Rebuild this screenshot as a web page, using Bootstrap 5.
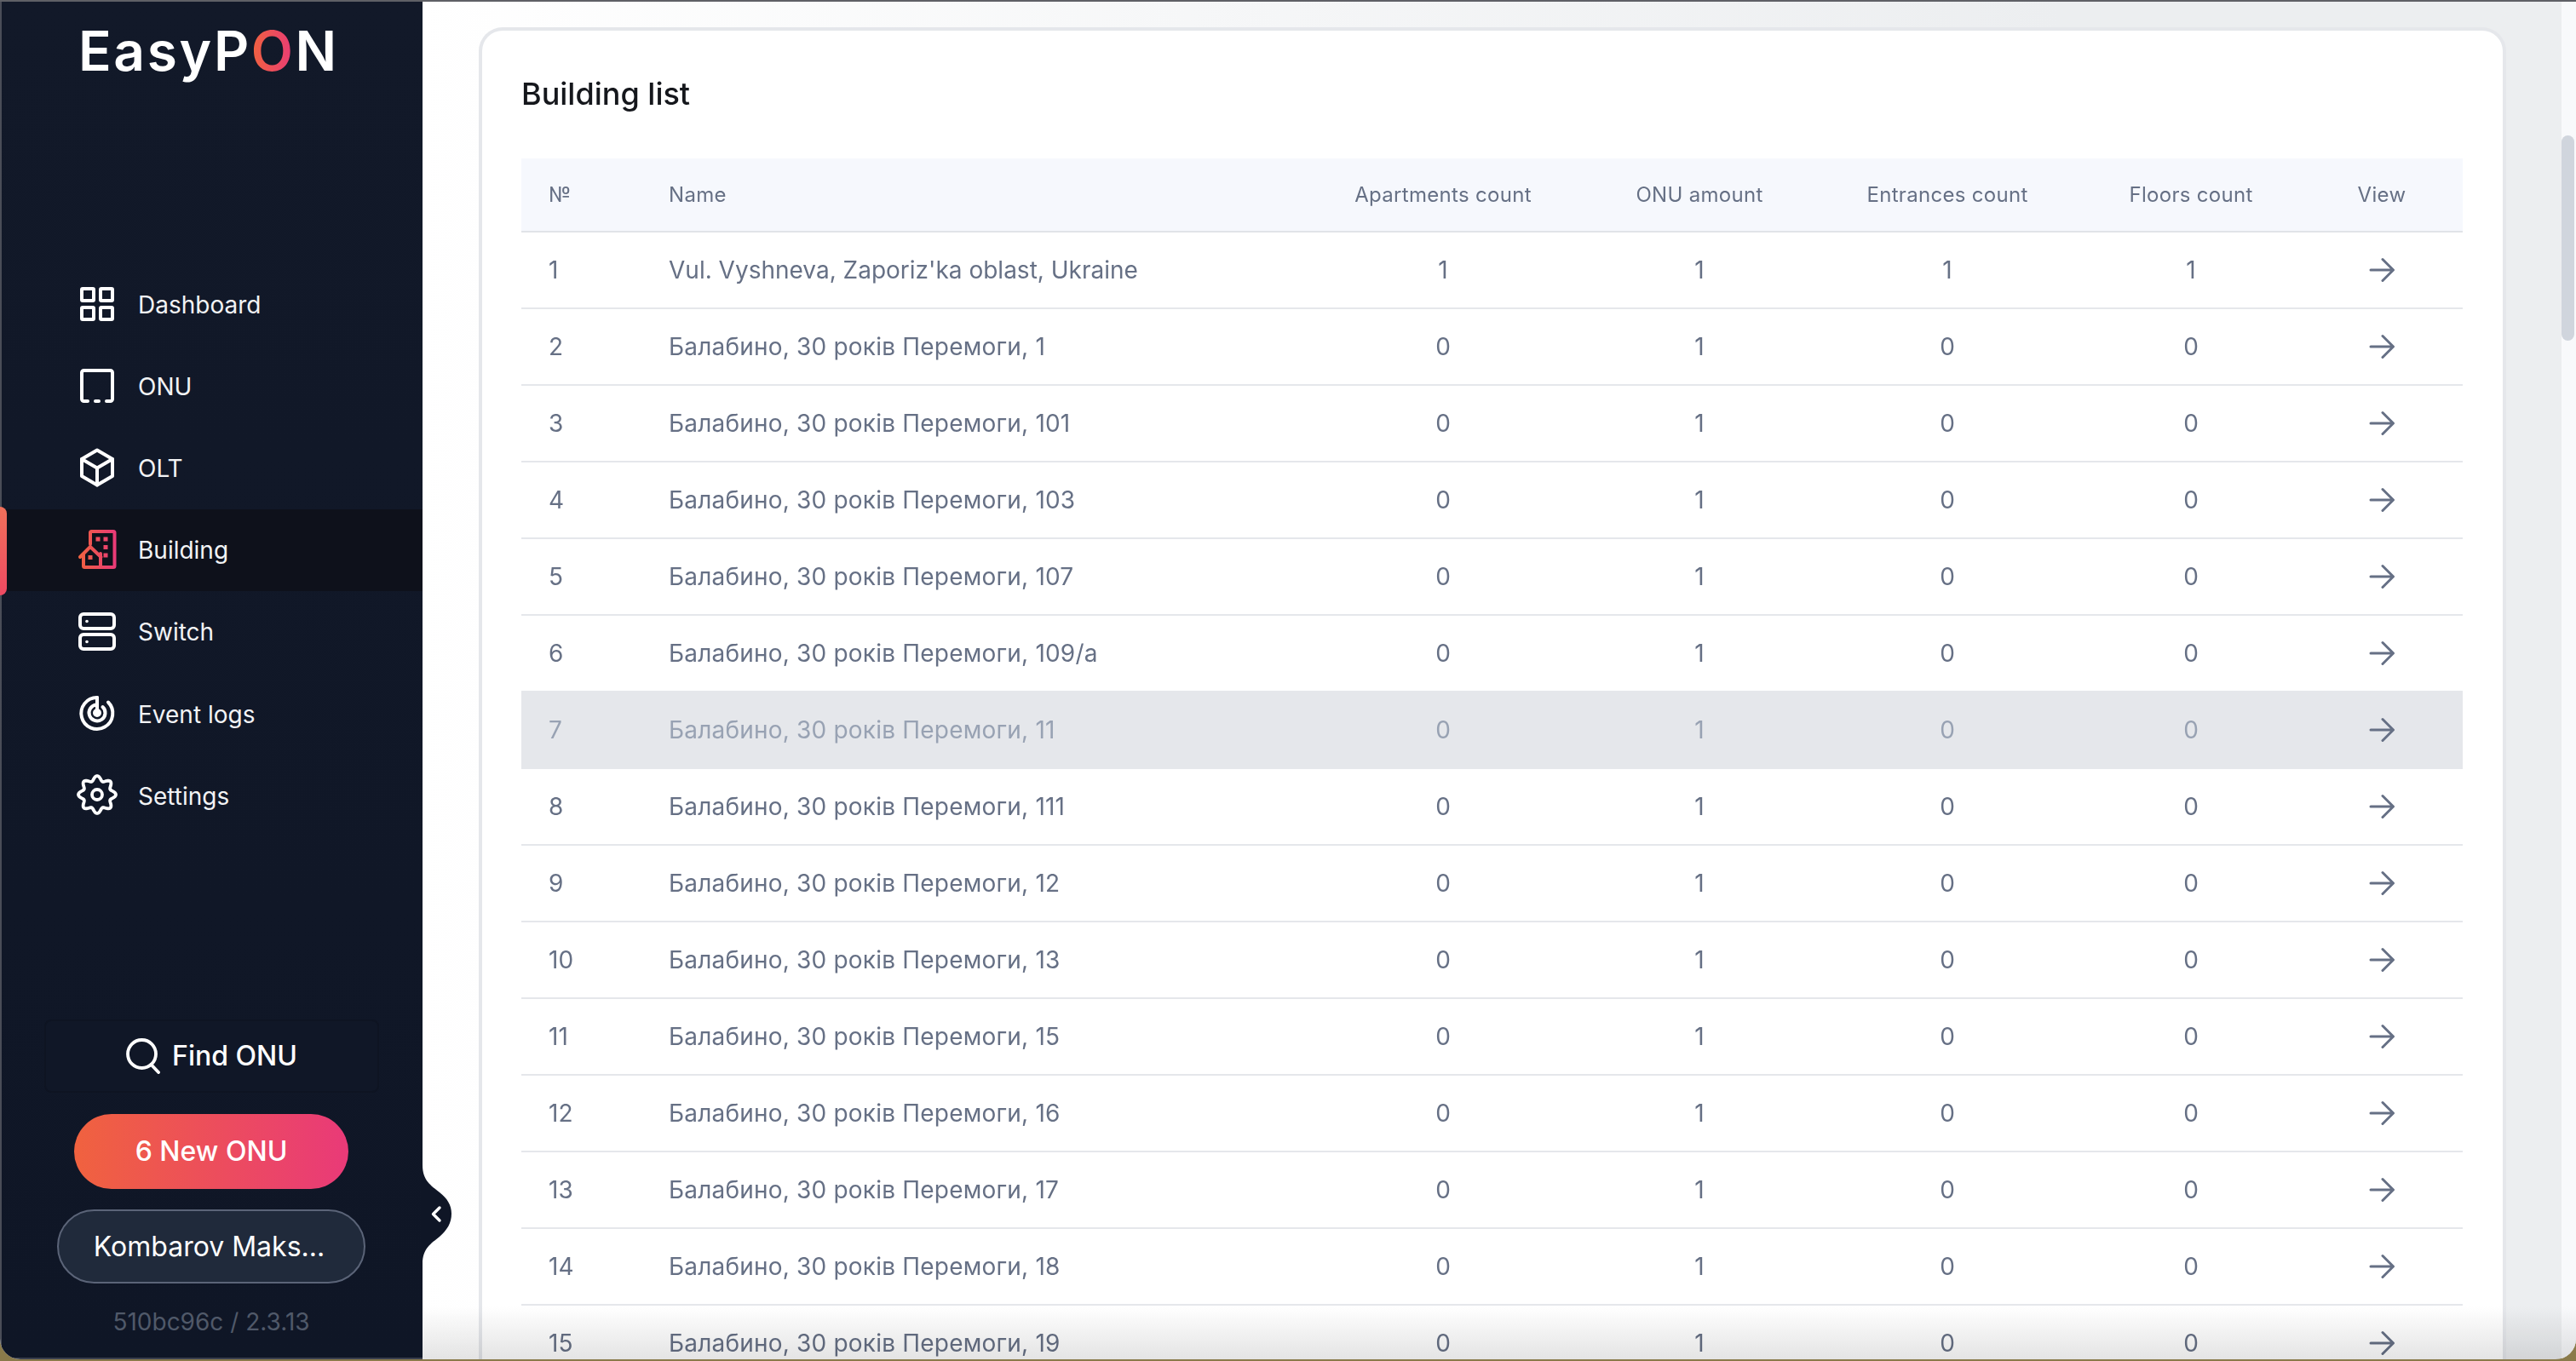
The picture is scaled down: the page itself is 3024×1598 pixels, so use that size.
<!DOCTYPE html>
<html lang="en">
<head>
<meta charset="UTF-8" />
<title>EasyPON</title>
<link href="https://cdn.jsdelivr.net/npm/bootstrap@5.3.3/dist/css/bootstrap.min.css" rel="stylesheet">
<script src="https://cdn.jsdelivr.net/npm/bootstrap@5.3.3/dist/js/bootstrap.bundle.min.js"></script>
<style>
html, body { height: 100%; }
body { background: #8a7a4a; overflow: hidden; font-family: Inter, "Liberation Sans", sans-serif; }
.app-window { height: 1596px; border-top: 2px solid #5f6066; border-radius: 0 0 24px 24px; overflow: hidden; position: relative; background: linear-gradient(90deg, #fff 16%, #eceef0 80%); }
.side-bar { width: 496px; flex: none; background: linear-gradient(180deg, #121929, #0f1626); border-left: 2px solid #4a4d57; border-bottom: 2px solid #3a3f4d; color: #fff; position: relative; z-index: 2; }
.brand { font-size: 64px; font-weight: 600; line-height: 1; letter-spacing: 2.6px; padding: 26px 0 0 90px; height: 300px; }
.brand-o { background: linear-gradient(90deg, #f0623f, #e93a78); -webkit-background-clip: text; background-clip: text; color: transparent; }
.side-nav { margin-top: 8px; }
.side-link { height: 96.1px; padding-left: 89px; gap: 25px; font-size: 28px; font-weight: 400; color: #f2f3f5; position: relative; text-decoration: none; }
.side-link svg { width: 46px; height: 46px; flex: none; margin-bottom: 3px; overflow: visible; }
.side-link.is-active { background: #0e111b; }
.side-link.is-active::before { content: ""; position: absolute; left: -2px; top: -3px; bottom: -5px; width: 8px; background: linear-gradient(180deg, #f0705a, #ee4a62); border-radius: 0 8px 8px 0; }
.find-box { height: 86px; margin: 0 51px 25px 50px; gap: 14px; border: 2px solid #0e1422; border-radius: 8px; background: #101727; font-size: 32px; font-weight: 500; }
.new-onu { height: 88px; margin: 0 87px 24px 85px; border-radius: 44px; background: linear-gradient(90deg, #f0623f, #e93a78); font-size: 32px; font-weight: 500; }
.user-pill { height: 87px; margin: 0 67px 25px 65px; padding-right: 5px; border: 2px solid #5b6478; border-radius: 44px; background: #202a3b; font-size: 32px; font-weight: 400; }
.build-ver { font-size: 28px; color: #505969; line-height: 40px; padding-bottom: 22px; padding-right: 2px; }
.collapse-handle { position: absolute; left: 494px; top: 1366px; width: 40px; height: 116px; z-index: 3; }
.main-area { padding: 30px 82px 0 66px; position: relative; min-width: 0; }
.list-card { border: 4px solid #e5e7eb; border-bottom: 0; border-radius: 28px 28px 0 0; background: #fff; padding: 0 48px 0 46px; height: 1800px; }
.list-title { font-size: 36px; font-weight: 500; color: #15171c; line-height: 44px; margin: 0; padding: 52px 0 54px; }
.bld-table { width: 2279px; table-layout: fixed; border-collapse: collapse; color: #667085; font-size: 28px; }
.bld-table th { height: 86px; background: #f6f8fd; border-bottom: 2px solid #e1e3e8; font-size: 24px; font-weight: 400; letter-spacing: .3px; color: #667085; }
.bld-table td { height: 90px; border-bottom: 2px solid #e5e7eb; }
.bld-table th, .bld-table td { text-align: center; padding: 0; }
.bld-table th:first-child, .bld-table td:first-child { padding-left: 32px; text-align: left; }
.bld-table th:nth-child(2), .bld-table td:nth-child(2) { padding-left: 33px; text-align: left; }
.bld-table td.addr-uk { letter-spacing: .2px; }
.bld-table tr.is-muted td { background: #e5e7eb; color: #98a2b3; border-bottom-color: #e5e7eb; }
.row-arrow { width: 32px; height: 32px; display: block; margin: 0 auto; }
.scroll-track { position: absolute; right: 0; top: 0; bottom: 0; width: 17px; background: #f8f9fb; z-index: 1; }
.scroll-thumb { position: absolute; left: 0; right: 2px; top: 157px; height: 241px; border-radius: 8px; background: #d0d5dd; }
.bottom-fade { position: absolute; left: 496px; right: 0; bottom: 0; height: 62px; background: linear-gradient(180deg, #fff, #e4e4e4); mix-blend-mode: multiply; z-index: 1; pointer-events: none; }
</style>
</head>
<body>
<div class="app-window d-flex">
  <aside class="side-bar d-flex flex-column">
    <div class="brand">EasyP<span class="brand-o">O</span>N</div>
    <nav class="side-nav d-flex flex-column">
      <a class="side-link d-flex align-items-center" href="#">
        <svg viewBox="0 0 46 46" fill="none" stroke="#fff" stroke-width="4" stroke-linejoin="round"><rect x="5" y="5" width="14" height="14" rx="1"/><rect x="27" y="5" width="14" height="14" rx="1"/><rect x="5" y="27" width="14" height="14" rx="1"/><rect x="27" y="27" width="14" height="14" rx="1"/></svg>Dashboard</a>
      <a class="side-link d-flex align-items-center" href="#">
        <svg viewBox="0 0 46 46" fill="none" stroke="#fff" stroke-width="4" stroke-linecap="round" stroke-linejoin="round"><path d="M12 41H7.500a2.500 2.500 0 0 1-2.500-2.500V7.500A2.500 2.500 0 0 1 7.500 5h31A2.500 2.500 0 0 1 41 7.500v31a2.500 2.500 0 0 1-2.500 2.500H34"/><path d="M21 41h4"/></svg>ONU</a>
      <a class="side-link d-flex align-items-center" href="#">
        <svg viewBox="0 0 46 46" fill="none" stroke="#fff" stroke-width="4" stroke-linecap="round" stroke-linejoin="round"><path d="M23 2.500 41 13v20L23 43.500 5 33V13Z"/><path d="M5 13 23 23.500 41 13M23 23.500v20"/></svg>OLT</a>
      <a class="side-link is-active d-flex align-items-center" href="#">
        <svg viewBox="0 0 46 46" fill="none"><defs><linearGradient id="bldg" gradientUnits="userSpaceOnUse" x1="1" x2="45" y1="0" y2="0"><stop offset="0" stop-color="#f0623f"/><stop offset="1" stop-color="#e93a78"/></linearGradient></defs><path d="M15 17V3.500A1.500 1.500 0 0 1 16.500 2H42a1.500 1.500 0 0 1 1.500 1.500V42.500A1.500 1.500 0 0 1 42 44H8.500A1.500 1.500 0 0 1 7 42.500V28M3 32 15 20 27.500 32M27 28V44" stroke="url(#bldg)" stroke-width="4" stroke-linejoin="round" stroke-linecap="round"/><rect x="21.500" y="8.500" width="5" height="5" fill="url(#bldg)"/><rect x="30.500" y="8.500" width="5" height="5" fill="url(#bldg)"/><rect x="30.500" y="18" width="5" height="5" fill="url(#bldg)"/><rect x="30.500" y="27.500" width="5" height="5" fill="url(#bldg)"/><rect x="12.500" y="30" width="5" height="5" fill="url(#bldg)"/></svg>Building</a>
      <a class="side-link d-flex align-items-center" href="#">
        <svg viewBox="0 0 46 46" fill="none" stroke="#fff" stroke-width="4"><rect x="3" y="3" width="40" height="17" rx="4"/><rect x="3" y="27" width="40" height="17" rx="4"/><circle cx="11" cy="11.500" r="1.800" fill="#fff" stroke="none"/><circle cx="11" cy="35.500" r="1.800" fill="#fff" stroke="none"/></svg>Switch</a>
      <a class="side-link d-flex align-items-center" href="#">
        <svg viewBox="0 0 46 46" fill="none" stroke="#fff" stroke-width="4" stroke-linecap="round"><path d="M23 5A18.500 18.500 0 1 0 36 10.500"/><path d="M22 13.500A9.500 9.500 0 1 0 29.500 16"/><path d="M23 5v18"/><circle cx="23" cy="23" r="3" fill="#fff"/></svg>Event logs</a>
      <a class="side-link d-flex align-items-center" href="#">
        <svg viewBox="-23 -23 46 46" fill="none" stroke="#fff" stroke-width="3.800" stroke-linejoin="round"><path id="gear"/><circle cx="0" cy="0" r="6"/></svg>Settings</a>
    </nav>
    <div class="mt-auto d-flex flex-column">
      <div class="find-box d-flex align-items-center justify-content-center">
        <svg width="40" height="42" viewBox="0 0 40 42" fill="none" stroke="#fff" stroke-width="3.800" stroke-linecap="round"><circle cx="18.500" cy="18.500" r="16.500"/><path d="M29.500 31 38 40"/></svg>Find ONU</div>
      <div class="new-onu d-flex align-items-center justify-content-center">6 New ONU</div>
      <div class="user-pill d-flex align-items-center justify-content-center">Kombarov Maks...</div>
      <div class="build-ver text-center">510bc96c / 2.3.13</div>
    </div>
  </aside>
  <svg class="collapse-handle" viewBox="0 0 40 116"><path d="M0 0H2C2 18 12 24 22 32C31 39 36 47 36 57C36 68 31 76 22 84C12 92 2 98 2 116H0Z" fill="#0f1626"/><path d="M22 50 14.500 57.500 22 65" fill="none" stroke="#fff" stroke-width="3.400" stroke-linecap="round" stroke-linejoin="round"/></svg>
  <main class="main-area flex-grow-1">
    <div class="list-card">
      <h1 class="list-title">Building list</h1>
      <table class="bld-table">
        <colgroup><col style="width:140px"><col style="width:775px"><col style="width:334px"><col style="width:268px"><col style="width:314px"><col style="width:258px"><col style="width:190px"></colgroup>
        <thead><tr><th>№</th><th>Name</th><th>Apartments count</th><th>ONU amount</th><th>Entrances count</th><th>Floors count</th><th>View</th></tr></thead>
        <tbody id="rows"></tbody>
      </table>
    </div>
    <div class="scroll-track"><div class="scroll-thumb"></div></div>
  </main>
  <div class="bottom-fade"></div>
</div>
<script>
const names = ["Vul. Vyshneva, Zaporiz'ka oblast, Ukraine"].concat(
  ["1","101","103","107","109/а","11","111","12","13","15","16","17","18","19"].map(n => "Балабино, 30 років Перемоги, " + n));
const arrow = `<svg class="row-arrow" viewBox="0 0 32 32" fill="none" stroke="#667085" stroke-width="3" stroke-linecap="round" stroke-linejoin="round"><path d="M3 16H29M17 3.500 29.500 16 17 28.500"/></svg>`;
let html = "";
names.forEach((name, i) => {
  const one = i === 0 ? 1 : 0;
  html += `<tr class="${i === 6 ? "is-muted" : ""}"><td>${i + 1}</td><td class="${i ? "addr-uk" : ""}">${name}</td><td>${one}</td><td>1</td><td>${one}</td><td>${one}</td><td>${arrow}</td></tr>`;
});
document.getElementById("rows").innerHTML = html;

// gear outline, 8 lobes with one on top
let d = "";
for (let a = 0; a < 360; a += 3) {
  const t = a * Math.PI / 180;
  const r = 19.25 + 2.75 * Math.cos(8 * t);
  d += (a ? "L" : "M") + (r * Math.sin(t)).toFixed(2) + " " + (-r * Math.cos(t)).toFixed(2);
}
document.getElementById("gear").setAttribute("d", d + "Z");
</script>
</body>
</html>
